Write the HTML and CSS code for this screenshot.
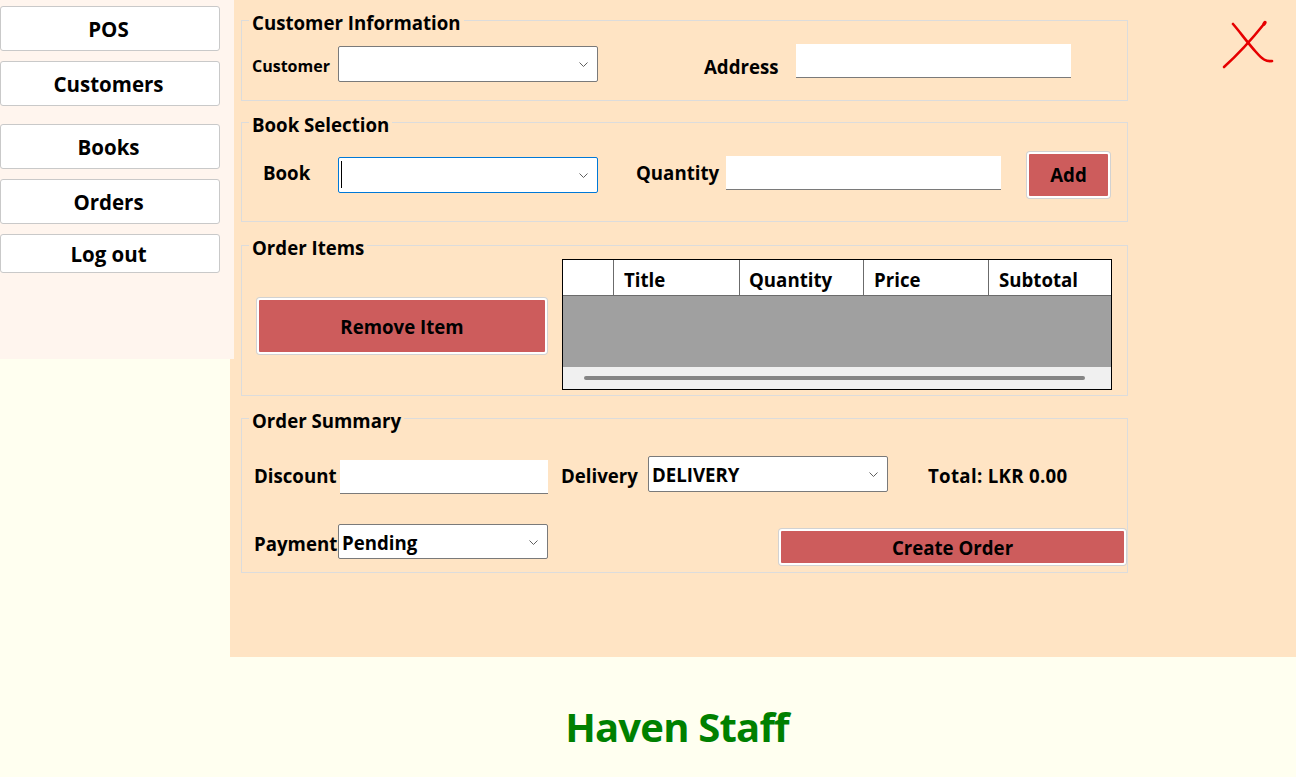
FILE: index.html
```html
<!DOCTYPE html>
<html lang="en">
<head>
<meta charset="utf-8">
<title>Haven Staff - POS</title>
<link rel="stylesheet" href="styles.css">
</head>
<body>
<div class="app">
  <div class="top">
    <nav class="sidebar">
      <button class="nav-btn nav-pos">POS</button>
      <button class="nav-btn nav-customers">Customers</button>
      <button class="nav-btn nav-books">Books</button>
      <button class="nav-btn nav-orders">Orders</button>
      <button class="nav-btn nav-logout">Log out</button>
    </nav>
    <main class="main">
      <div class="groups">
        <section class="group g1">
          <div class="group-title">Customer Information</div>
          <div class="row r1">
            <span class="lbl lbl-small lbl-customer">Customer</span>
            <div class="combo combo-customer"><span class="combo-text"></span><svg class="chev" width="9" height="5" viewBox="0 0 9 5"><path d="M0.5 0.5 L4.5 4.5 L8.5 0.5" fill="none" stroke="#606060" stroke-width="1"/></svg></div>
            <span class="lbl lbl-address">Address</span>
            <div class="textbox tb-address"></div>
          </div>
        </section>

        <section class="group g2">
          <div class="group-title">Book Selection</div>
          <div class="row r2">
            <span class="lbl lbl-book">Book</span>
            <div class="combo combo-book focused"><span class="caret"></span><svg class="chev" width="9" height="5" viewBox="0 0 9 5"><path d="M0.5 0.5 L4.5 4.5 L8.5 0.5" fill="none" stroke="#606060" stroke-width="1"/></svg></div>
            <span class="lbl lbl-qty">Quantity</span>
            <div class="textbox tb-qty"></div>
            <button class="red-btn btn-add">Add</button>
          </div>
        </section>

        <section class="group g3">
          <div class="group-title">Order Items</div>
          <div class="row r3">
            <button class="red-btn btn-remove">Remove Item</button>
            <div class="grid">
              <div class="grid-head">
                <div class="hcell hcell-row"></div>
                <div class="hcell hcell-title">Title</div>
                <div class="hcell hcell-qty">Quantity</div>
                <div class="hcell hcell-price">Price</div>
                <div class="hcell hcell-sub">Subtotal</div>
              </div>
              <div class="grid-body"></div>
              <div class="hscroll"><div class="hthumb"></div></div>
            </div>
          </div>
        </section>

        <section class="group g4">
          <div class="group-title">Order Summary</div>
          <div class="row r4a">
            <span class="lbl lbl-discount">Discount</span>
            <div class="textbox tb-discount"></div>
            <span class="lbl lbl-delivery">Delivery</span>
            <div class="combo combo-delivery"><span class="combo-text">DELIVERY</span><svg class="chev" width="9" height="5" viewBox="0 0 9 5"><path d="M0.5 0.5 L4.5 4.5 L8.5 0.5" fill="none" stroke="#606060" stroke-width="1"/></svg></div>
            <span class="lbl lbl-total">Total: LKR 0.00</span>
          </div>
          <div class="row r4b">
            <span class="lbl lbl-payment">Payment</span>
            <div class="combo combo-payment"><span class="combo-text">Pending</span><svg class="chev" width="9" height="5" viewBox="0 0 9 5"><path d="M0.5 0.5 L4.5 4.5 L8.5 0.5" fill="none" stroke="#606060" stroke-width="1"/></svg></div>
            <button class="red-btn btn-create">Create Order</button>
          </div>
        </section>
      </div>
      <button class="close-btn" aria-label="Close">
        <svg width="56" height="52" viewBox="0 0 56 52">
          <path d="M4 49 C 14 40, 28 26, 44 6" fill="none" stroke="#e60000" stroke-width="2.6" stroke-linecap="round"/>
          <path d="M44 6 L45 4.5" fill="none" stroke="#e60000" stroke-width="3.4" stroke-linecap="round"/>
          <path d="M13 6 C 20 14, 27 24, 36 34 C 42 41, 46 44, 52 43" fill="none" stroke="#e60000" stroke-width="2.6" stroke-linecap="round"/>
        </svg>
      </button>
    </main>
  </div>
  <footer class="brand">Haven Staff</footer>
</div>
</body>
</html>
```

FILE: styles.css
```css
* { box-sizing: border-box; }

html, body {
  margin: 0;
  padding: 0;
}

body {
  width: 1296px;
  height: 777px;
  overflow: hidden;
  background: #FFFFF0;
  font-family: "Open Sans", "Noto Sans", "Liberation Sans", sans-serif;
  font-weight: 700;
  color: #000;
}

button {
  font-family: inherit;
  font-weight: 700;
  color: #000;
  padding: 0;
  cursor: default;
}

.top {
  display: flex;
  height: 657px;
}

/* Sidebar */
.sidebar {
  flex: none;
  width: 234px;
  height: 359px;
  margin-right: -4px;
  position: relative;
  z-index: 1;
  background: #FFF5EE;
  display: flex;
  flex-direction: column;
  align-items: flex-start;
  padding-top: 6px;
}

.nav-btn {
  width: 220px;
  height: 45px;
  padding-right: 3px;
  background: #fff;
  border: 1px solid #c9c9c9;
  border-radius: 3px;
  font-size: 20.5px;
  line-height: 24px;
  display: flex;
  align-items: center;
  justify-content: center;
}
.nav-customers { margin-top: 10px; }
.nav-books { margin-top: 18px; }
.nav-orders { margin-top: 10px; }
.nav-logout { margin-top: 10px; height: 39px; }

/* Main panel */
.main {
  flex: 1;
  background: #FFE4C4;
  display: flex;
  align-items: flex-start;
  padding-left: 11px;
  padding-top: 20px;
}

.groups {
  width: 887px;
  flex: none;
}

.group {
  border: 1px solid #dcdcdc;
  padding-left: 10px;
}
.g1 { height: 81px; }
.g2 { height: 100px; margin-top: 21px; }
.g3 { height: 151px; margin-top: 23px; }
.g4 { height: 155px; margin-top: 22px; }

.group-title {
  width: max-content;
  margin-top: -9px;
  margin-left: -3px;
  padding: 0 3px;
  background: #FFE4C4;
  font-size: 18.67px;
  line-height: 22px;
}

.row {
  display: flex;
  align-items: flex-start;
}

.lbl {
  flex: none;
  font-size: 18.67px;
  line-height: 24px;
  white-space: nowrap;
}
.lbl-small {
  font-size: 16px;
  line-height: 20px;
}

.combo {
  flex: none;
  position: relative;
  height: 36px;
  background: #fff;
  border: 1px solid #7a7a7a;
  border-radius: 2px;
  display: flex;
  align-items: flex-start;
}
.combo.focused { border-color: #0078d7; }
.combo-text {
  display: block;
  padding: 6px 0 0 3px;
  font-size: 18.67px;
  line-height: 24px;
}
.chev {
  position: absolute;
  right: 9px;
  top: 15px;
}
.caret {
  display: block;
  width: 1px;
  height: 27px;
  margin: 3px 0 0 2px;
  background: #000;
}

.textbox {
  flex: none;
  height: 34px;
  background: #fff;
  border-bottom: 1px solid #7a7a7a;
}

.red-btn {
  flex: none;
  background: #CD5C5C;
  border: 2px solid #fff;
  border-radius: 3px;
  box-shadow: 0 0 0 1px #d2d2d2;
  font-size: 18.67px;
  line-height: 24px;
  display: flex;
  align-items: center;
  justify-content: center;
}

/* G1 */
.r1 { margin-top: 10px; }
.lbl-customer { width: 86px; margin-top: 12px; }
.combo-customer { width: 260px; margin-top: 2px; }
.lbl-address { width: 92px; margin-left: 106px; margin-top: 11px; }
.tb-address { width: 275px; }

/* G2 */
.r2 { margin-top: 16px; }
.lbl-book { width: 75px; margin-left: 11px; margin-top: 9px; }
.combo-book { width: 260px; margin-top: 5px; }
.lbl-qty { width: 90px; margin-left: 38px; margin-top: 9px; }
.tb-qty { width: 275px; margin-top: 4px; }
.btn-add { width: 83px; height: 46px; margin-left: 26px; }

/* G3 */
.r3 { margin-top: 0; }
.btn-remove { width: 290px; height: 56px; margin-left: 5px; margin-top: 39px; padding-top: 2px; }

.grid {
  flex: none;
  width: 550px;
  height: 131px;
  margin-left: 15px;
  border: 1px solid #000;
  display: flex;
  flex-direction: column;
  overflow: hidden;
}
.grid-head {
  display: flex;
  height: 36px;
  flex: none;
  background: #fff;
  border-bottom: 1px solid #6b6b6b;
}
.hcell {
  flex: none;
  height: 35px;
  border-right: 1px solid #6b6b6b;
  font-size: 18.67px;
  line-height: 24px;
  padding-top: 8px;
  padding-left: 10px;
  white-space: nowrap;
}
.hcell-row { width: 51px; }
.hcell-title { width: 126px; }
.hcell-qty { width: 124px; padding-left: 9px; }
.hcell-price { width: 125px; }
.hcell-sub { width: 140px; }

.grid-body {
  flex: 1;
  background: #a0a0a0;
}
.hscroll {
  flex: none;
  height: 22px;
  background: #f0f0f0;
  display: flex;
  align-items: center;
  padding: 0 26px 0 21px;
}
.hthumb {
  flex: 1;
  height: 4px;
  border-radius: 2px;
  background: #858585;
}

/* G4 */
.r4a { margin-top: 24px; height: 37px; }
.lbl-discount { width: 86px; margin-left: 2px; margin-top: 8px; }
.tb-discount { width: 208px; margin-top: 4px; }
.lbl-delivery { width: 87px; margin-left: 13px; margin-top: 8px; }
.combo-delivery { width: 240px; }
.lbl-total { margin-left: 40px; margin-top: 8px; letter-spacing: 0.3px; }

.r4b { margin-top: 31px; }
.lbl-payment { width: 84px; margin-left: 2px; margin-top: 8px; }
.combo-payment { width: 210px; height: 35px; }
.btn-create { width: 347px; height: 36px; margin-left: 231px; margin-top: 5px; padding-top: 2px; }

/* Close */
.close-btn {
  flex: none;
  margin-left: 92px;
  margin-top: -2px;
  width: 56px;
  height: 52px;
  background: transparent;
  border: none;
  display: block;
}
.close-btn svg { display: block; }

/* Footer */
.brand {
  height: 120px;
  display: flex;
  justify-content: center;
  padding-left: 58px;
  padding-top: 45px;
  color: #008000;
  font-size: 40px;
  line-height: 50px;
  letter-spacing: -0.8px;
  font-weight: 700;
}
```
